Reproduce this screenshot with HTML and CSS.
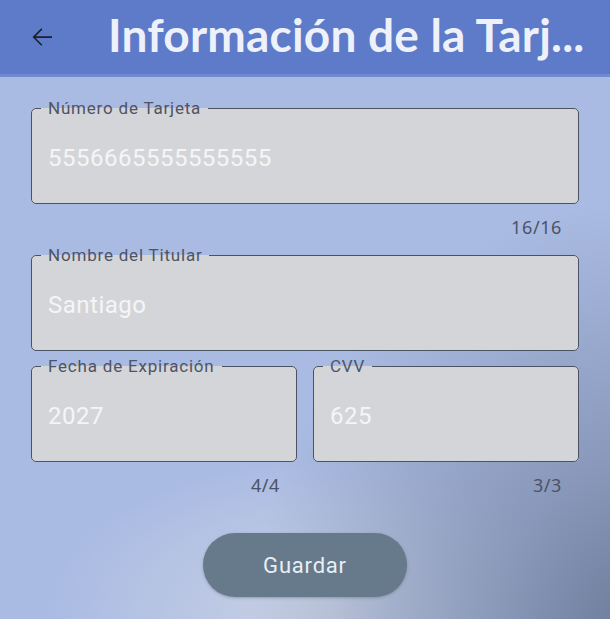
FILE: index.html
```html
<!DOCTYPE html>
<html lang="es">
<head>
<meta charset="utf-8">
<link rel="stylesheet" href="styles.css">
</head>
<body>
<header class="appbar">
  <svg class="back" width="30" height="30" viewBox="0 0 24 24"><path d="M20 11.35H6.9l5.4-5.4-0.9-0.9L4.4 12l7 7 0.9-0.9-5.4-5.4H20z" fill="#1c1f2a"/></svg>
  <h1 class="title">Información de la Tarj...</h1>
</header>
<main class="content">
  <div class="group">
    <fieldset class="field">
      <legend class="label">Número de Tarjeta</legend>
      <div class="value">5556665555555555</div>
    </fieldset>
    <div class="counter">16/16</div>
  </div>
  <div class="group">
    <fieldset class="field">
      <legend class="label">Nombre del Titular</legend>
      <div class="value">Santiago</div>
    </fieldset>
  </div>
  <div class="row">
    <div class="group">
      <fieldset class="field">
        <legend class="label">Fecha de Expiración</legend>
        <div class="value">2027</div>
      </fieldset>
      <div class="counter">4/4</div>
    </div>
    <div class="group">
      <fieldset class="field">
        <legend class="label">CVV</legend>
        <div class="value">625</div>
      </fieldset>
      <div class="counter">3/3</div>
    </div>
  </div>
  <div class="actions">
    <button class="save">Guardar</button>
  </div>
</main>
</body>
</html>
```
FILE: styles.css
```css
html, body {
  margin: 0;
  padding: 0;
  height: 100%;
}
body {
  width: 610px;
  height: 619px;
  overflow: hidden;
  font-family: Roboto, "Liberation Sans", sans-serif;
  background:
    radial-gradient(ellipse 400px 440px at 650px 640px, rgba(105,120,150,1) 0%, rgba(125,140,172,0.75) 40%, rgba(170,187,228,0) 100%),
    radial-gradient(ellipse 280px 150px at 330px 610px, rgba(205,212,228,0.9) 0%, rgba(190,200,225,0) 100%),
    #aabbe3;
}
.appbar {
  height: 77px;
  background: #5e7bc9;
  border-bottom: 3px solid #6f8ad0;
  display: flex;
  align-items: center;
  box-sizing: border-box;
  padding-left: 27px;
}
.back {
  flex: none;
}
.title {
  margin: -6px 0 0 51px;
  font-family: Lato, "Noto Sans", sans-serif;
  font-weight: 700;
  font-size: 46px;
  color: #eef1f9;
  letter-spacing: 0.2px;
  white-space: nowrap;
}
.content {
  padding: 22px 31px 0 31px;
  display: flex;
  flex-direction: column;
}
.field {
  margin: 0;
  padding: 0 16px;
  border: 1.5px solid #4b5263;
  border-radius: 5px;
  background: #d4d5d8;
  min-width: 0;
}
.label {
  padding: 0 7px;
  margin-left: -7px;
  font-size: 17px;
  line-height: 18px;
  letter-spacing: 0.8px;
  color: #4d5466;
}
.value {
  height: 86px;
  box-sizing: border-box;
  padding-top: 27px;
  font-size: 24px;
  line-height: 28px;
  letter-spacing: 0.5px;
  color: #f4f5f7;
}
.counter {
  height: 42px;
  box-sizing: border-box;
  padding-top: 13px;
  padding-right: 17px;
  text-align: right;
  font-family: "Noto Sans", sans-serif;
  font-size: 18px;
  line-height: 20px;
  letter-spacing: 0.6px;
  color: #4b5366;
}
.row {
  margin-top: 6px;
  display: grid;
  grid-template-columns: 1fr 1fr;
  column-gap: 16px;
}
.actions {
  display: flex;
  justify-content: flex-start;
  padding-left: 172px;
  margin-top: 29px;
}
.save {
  width: 204px;
  height: 64px;
  border: none;
  border-radius: 32px;
  background: #667a8b;
  color: #e9eef5;
  font-family: Roboto, sans-serif;
  font-size: 22px;
  letter-spacing: 0.8px;
  box-shadow: 0 1px 3px rgba(60,70,90,0.35);
}
```
